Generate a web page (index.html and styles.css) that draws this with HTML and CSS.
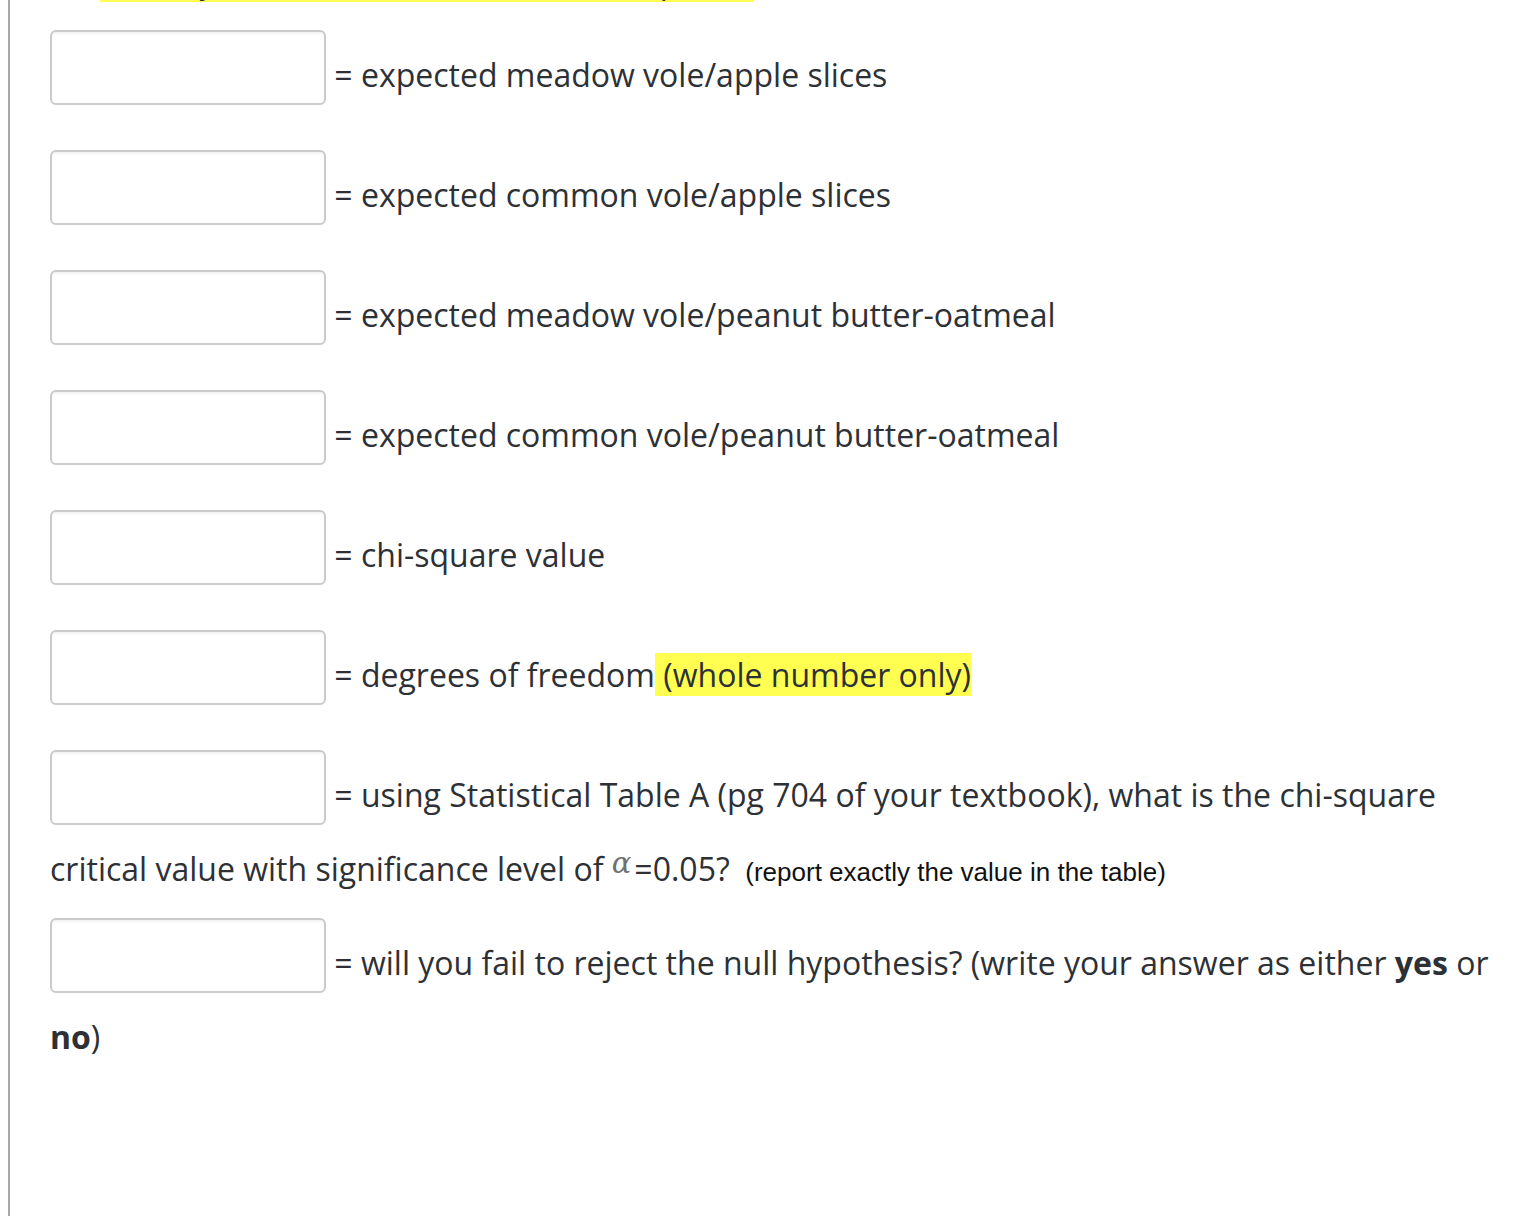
FILE: index.html
```html
<!DOCTYPE html>
<html lang="en">
<head>
<meta charset="utf-8">
<title>Chi-square worksheet</title>
<link rel="stylesheet" href="styles.css">
</head>
<body>
<div class="page">
  <div class="intro-clip">
    <p class="intro">Be <span class="hl">round your answers to three decimal places</span></p>
  </div>
  <p class="row"><span class="blank"></span> = expected meadow vole/apple slices</p>
  <p class="row"><span class="blank"></span> = expected common vole/apple slices</p>
  <p class="row"><span class="blank"></span> = expected meadow vole/peanut butter-oatmeal</p>
  <p class="row"><span class="blank"></span> = expected common vole/peanut butter-oatmeal</p>
  <p class="row"><span class="blank"></span> = chi-square value</p>
  <p class="row"><span class="blank"></span> = degrees of freedom<span class="hl"> (whole number only)</span></p>
  <p class="row"><span class="blank"></span> = using Statistical Table A (pg 704 of your textbook), what is the chi-square critical value with significance level of <span class="alpha">α</span>=0.05?&nbsp;<span class="small"> (report exactly the value in the table)</span></p>
  <p class="row"><span class="blank"></span> = will you fail to reject the null hypothesis? (write your answer as either <strong>yes</strong> or <strong>no</strong>)</p>
</div>
</body>
</html>
```

FILE: styles.css
```css
html, body {
  margin: 0;
  padding: 0;
  background: #ffffff;
}

body {
  font-family: "Open Sans", "DejaVu Sans", sans-serif;
  font-size: 32px;
  line-height: 48px;
  color: #2d3136;
  overflow: hidden;
}

.page {
  margin-left: 8px;
  border-left: 2px solid #a9a9a9;
  min-height: 100vh;
  padding: 0 20px 0 40px;
  box-sizing: border-box;
}

.intro-clip {
  height: 5px;
  overflow: hidden;
  display: flex;
  flex-direction: column;
  justify-content: flex-end;
}

.page .intro {
  margin: 0;
  flex: none;
  text-indent: 3px;
}

.page .row {
  margin: 25px 0 0 0;
}

.hl {
  background: #ffff52;
}

.blank {
  display: inline-block;
  width: 276px;
  height: 75px;
  box-sizing: border-box;
  border: 2px solid #cbcbcb;
  border-radius: 6px;
  background: #ffffff;
  box-shadow: inset 0 2px 2px rgba(0, 0, 0, 0.05);
  margin-bottom: 20px;
  vertical-align: -38px;
}

strong {
  font-weight: 700;
}

.alpha {
  font-family: "DejaVu Serif", "Liberation Serif", serif;
  font-style: italic;
  font-size: 29px;
  color: #707070;
  vertical-align: 8px;
  line-height: 0;
  padding-right: 3px;
}

.small {
  font-family: "Liberation Sans", Arial, sans-serif;
  font-size: 26px;
  line-height: 1;
  color: #111111;
}
```
